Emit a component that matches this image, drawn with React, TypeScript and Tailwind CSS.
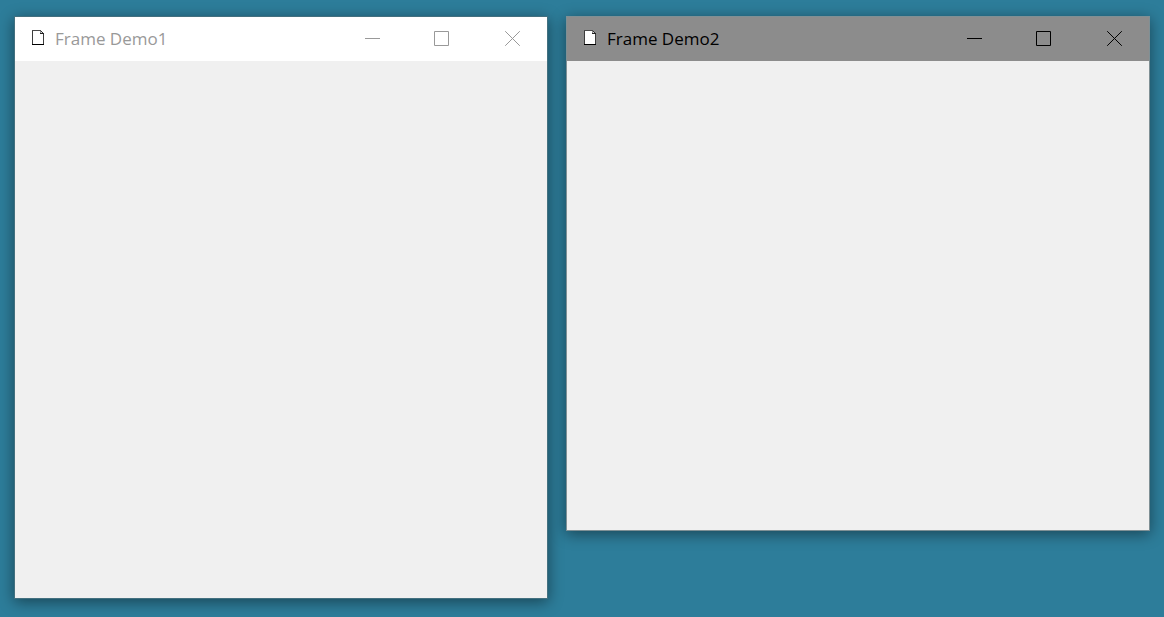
import React from "react";
import { clsx } from "clsx";

function DocumentIcon() {
  return (
    <svg width="12" height="18" viewBox="0 0 12 18" shapeRendering="crispEdges" aria-hidden="true" className="shrink-0">
      <path d="M0 0H8V1H9V2H10V3H11V4H12V15H0Z" fill="#fff" />
      <path d="M0 0H9V1H0Z" fill="#4a4a4a" />
      <path d="M0 1H1V14H0Z" fill="#3c3c3c" />
      <path d="M8 1H9V4H8Z" fill="#8a8a8a" />
      <path d="M9 1H10V2H9ZM10 2H11V3H10Z" fill="#333" />
      <path d="M9 2H10V3H9Z" fill="#ddd" />
      <path d="M8 3H12V4H8Z" fill="#222" />
      <path d="M11 4H12V14H11Z" fill="#3c3c3c" />
      <path d="M0 14H12V15H0Z" fill="#000" />
    </svg>
  );
}

const glyphs = {
  Minimize: <path d="M1 7.5H16" />,
  Maximize: <path d="M0.5 0.5H14.5V14.5H0.5Z" />,
  Close: <path d="M1.2 0.2L15.8 14.8M15.8 0.2L1.2 14.8" />,
};

type FrameProps = {
  title: string;
  active?: boolean;
  bodyClass: string;
};

function Frame({ title, active = false, bodyClass }: FrameProps) {
  return (
    <section
      aria-label={title}
      className={clsx(
        "border shadow-[0_3px_14px_rgba(0,0,0,0.45)]",
        active ? "border-[#7f9095]" : "border-[#43707f]",
      )}
    >
      <header
        className={clsx(
          "flex h-11 items-center pl-[17px]",
          active ? "bg-[#8c8c8c] text-black" : "bg-white text-[#999999]",
        )}
      >
        <DocumentIcon />
        <h1 className="ml-[11px] flex-1 truncate text-[17px] leading-7 font-normal">{title}</h1>
        {Object.entries(glyphs).map(([label, glyph]) => (
          <button key={label} type="button" aria-label={label} className="flex h-11 w-[70px] items-center justify-center">
            <svg width="16" height="16" viewBox="0 0 16 16" fill="none" stroke="currentColor" strokeWidth="1">
              {glyph}
            </svg>
          </button>
        ))}
      </header>
      <div className={clsx("bg-[#f0f0f0]", bodyClass)} />
    </section>
  );
}

export default function App() {
  return (
    <main className="grid min-h-screen grid-cols-[534fr_584fr] items-start gap-[18px] bg-[#2d7d9a] px-[14px] pt-4 font-['Open_Sans','Noto_Sans',sans-serif]">
      <Frame title="Frame Demo1" bodyClass="h-[calc(100vh-80px)]" />
      <Frame title="Frame Demo2" active bodyClass="h-[calc(100vh-148px)]" />
    </main>
  );
}
